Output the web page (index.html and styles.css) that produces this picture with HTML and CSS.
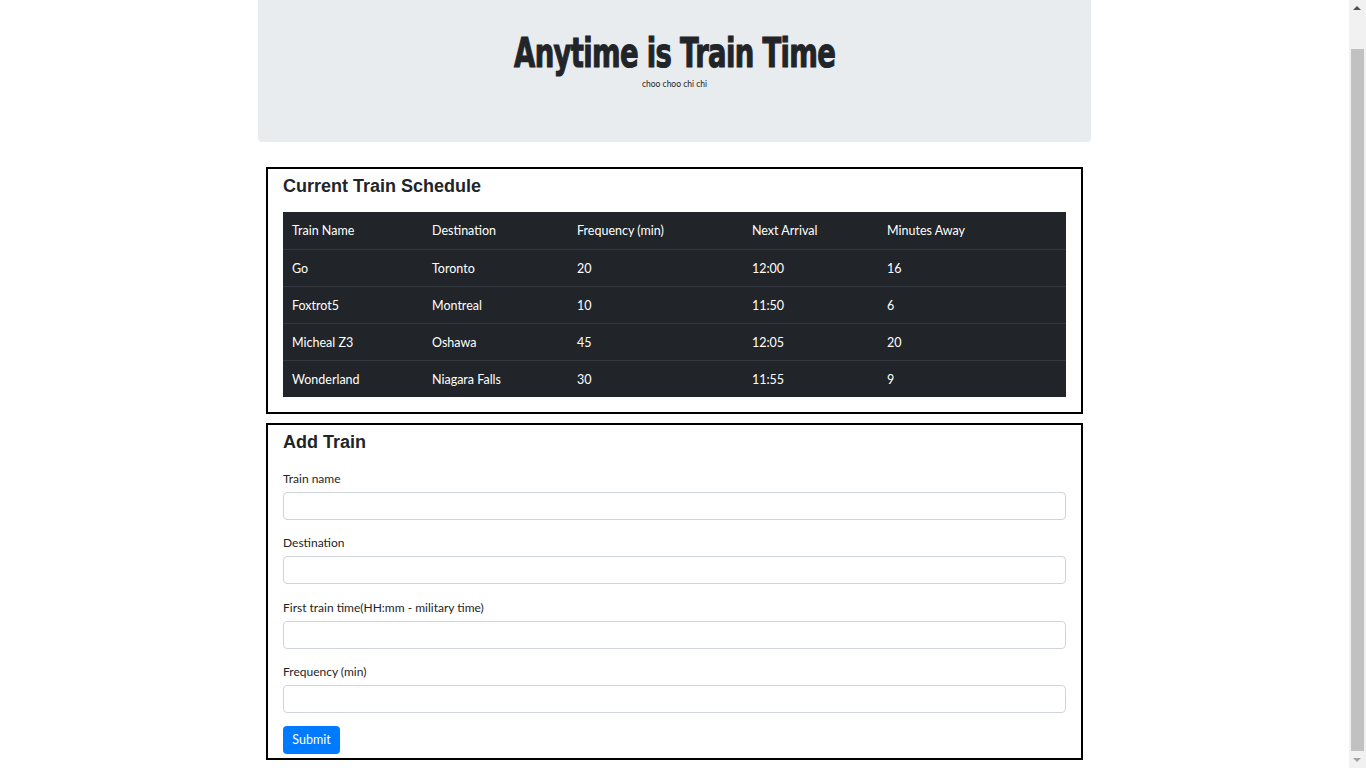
FILE: index.html
```html
<!DOCTYPE html>
<html lang="en">
<head>
<meta charset="utf-8">
<title>Anytime is Train Time</title>
<link rel="stylesheet" href="styles.css">
</head>
<body>
<div class="page">
  <header class="jumbotron">
    <h1 class="title"><span class="title-text">Anytime is Train Time</span></h1>
    <p class="subtitle">choo choo chi chi</p>
  </header>
  <main class="main">
    <section class="panel panel-schedule">
      <h2 class="panel-title">Current Train Schedule</h2>
      <table class="schedule">
        <thead>
          <tr><th class="c1">Train Name</th><th class="c2">Destination</th><th class="c3">Frequency (min)</th><th class="c4">Next Arrival</th><th class="c5">Minutes Away</th></tr>
        </thead>
        <tbody>
          <tr><td>Go</td><td>Toronto</td><td>20</td><td>12:00</td><td>16</td></tr>
          <tr><td>Foxtrot5</td><td>Montreal</td><td>10</td><td>11:50</td><td>6</td></tr>
          <tr><td>Micheal Z3</td><td>Oshawa</td><td>45</td><td>12:05</td><td>20</td></tr>
          <tr><td>Wonderland</td><td>Niagara Falls</td><td>30</td><td>11:55</td><td>9</td></tr>
        </tbody>
      </table>
    </section>
    <section class="panel panel-form">
      <h2 class="panel-title">Add Train</h2>
      <form class="form">
        <div class="form-group">
          <label class="label" for="name">Train name</label>
          <input class="input" id="name" type="text">
        </div>
        <div class="form-group">
          <label class="label" for="dest">Destination</label>
          <input class="input" id="dest" type="text">
        </div>
        <div class="form-group">
          <label class="label" for="first">First train time(HH:mm - military time)</label>
          <input class="input" id="first" type="text">
        </div>
        <div class="form-group">
          <label class="label" for="freq">Frequency (min)</label>
          <input class="input" id="freq" type="text">
        </div>
        <button class="btn" type="button">Submit</button>
      </form>
    </section>
  </main>
</div>
<div class="scrollbar">
  <div class="sb-arrow sb-up"></div>
  <div class="sb-track"><div class="sb-thumb"></div></div>
  <div class="sb-arrow sb-down"></div>
</div>
</body>
</html>
```

FILE: styles.css
```css
html, body {
  margin: 0;
  padding: 0;
  height: 100%;
  overflow: hidden;
  background: #fff;
}
body {
  font-family: Lato, "Noto Sans", sans-serif;
  color: #212529;
}
.page {
  width: calc(100% - 17px);
}
.jumbotron {
  width: 833px;
  height: 142px;
  margin: 0 auto;
  background: #e9ecef;
  border-radius: 0 0 4px 4px;
  text-align: center;
  box-sizing: border-box;
  padding-top: 30px;
}
.title {
  margin: 0;
  font-family: "DejaVu Sans", sans-serif;
  font-weight: bold;
  font-size: 41px;
  line-height: 46px;
  color: #212529;
}
.title-text {
  display: inline-block;
  letter-spacing: -1px;
  transform: scaleX(0.67);
  -webkit-text-stroke: 1.2px #212529;
}
.subtitle {
  margin: 2px 0 0;
  font-size: 8.5px;
  line-height: 12px;
}
.main {
  width: 817px;
  margin: 25px auto 0;
}
.panel {
  border: 2px solid #000;
  padding: 6px 15px 15px;
}
.panel-form {
  margin-top: 9px;
  padding-bottom: 4px;
}
.panel-title {
  margin: 0 0 14px;
  font-family: "Liberation Sans", Arial, sans-serif;
  font-weight: bold;
  font-size: 18px;
  line-height: 23px;
}
.schedule {
  width: 100%;
  border-collapse: collapse;
  background: #212529;
  color: #fff;
  font-size: 12.5px;
}
.schedule th, .schedule td {
  text-align: left;
  font-weight: normal;
  height: 37px;
  padding: 1px 9px 0;
  box-sizing: border-box;
  border-top: 1px solid #32383e;
}
.schedule thead th {
  border-top: none;
}
.c1 { width: 140px; }
.c2 { width: 145px; }
.c3 { width: 175px; }
.c4 { width: 135px; }
.form-group {
  margin-bottom: 12.3px;
}
.label {
  display: block;
  font-size: 12px;
  line-height: 21px;
  margin-bottom: 3px;
}
.input {
  display: block;
  width: 100%;
  height: 28px;
  box-sizing: border-box;
  border: 1px solid #ced4da;
  border-radius: 4px;
  background: #fff;
  padding: 4px 8px;
  margin: 0;
}
.btn {
  display: block;
  width: 57px;
  height: 28px;
  background: #007bff;
  color: #fff;
  border: none;
  border-radius: 4px;
  font-family: Lato, sans-serif;
  font-size: 12.5px;
  padding: 0;
  margin-top: 13px;
}
.scrollbar {
  position: fixed;
  top: 0;
  right: 0;
  width: 17px;
  height: 100%;
  background: #f1f1f1;
  display: flex;
  flex-direction: column;
}
.sb-arrow {
  height: 17px;
  position: relative;
}
.sb-up::after, .sb-down::after {
  content: "";
  position: absolute;
  left: 4px;
  border-left: 4px solid transparent;
  border-right: 4px solid transparent;
}
.sb-up::after {
  top: 6px;
  border-bottom: 4px solid #505050;
}
.sb-down::after {
  top: 7px;
  border-top: 4px solid #a3a3a3;
}
.sb-track {
  flex: 1;
  padding: 32px 2px 0;
}
.sb-thumb {
  height: 702px;
  background: #c1c1c1;
}
```
